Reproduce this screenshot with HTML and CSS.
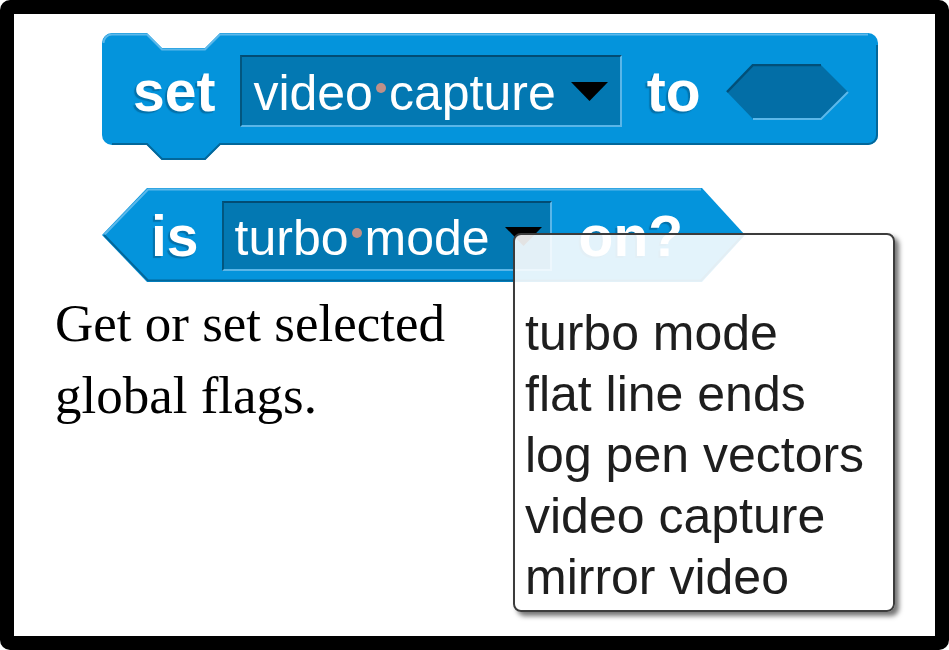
FILE: index.html
```html
<!DOCTYPE html>
<html>
<head>
<meta charset="utf-8">
<link rel="stylesheet" href="styles.css">
</head>
<body>
<div class="frame">
  <div class="block cmd">
    <svg class="shape" width="776" height="128" viewBox="0 0 776 128">
      <path d="M0,10 A10,10 0 0 1 10,0 L45,0 L60,15 L103,15 L118,0 L766,0 A10,10 0 0 1 776,10 L776,102 A10,10 0 0 1 766,112 L118,112 L103,127 L60,127 L45,112 L10,112 A10,10 0 0 1 0,102 Z" fill="#0494dc"/>
      <path d="M1.5,10 A8.5,8.5 0 0 1 10,1.5 L45,1.5 L60,16.5 L103,16.5 L118,1.5 L766,1.5" fill="none" stroke="#5cb8ea" stroke-width="2"/>
      <path d="M10,111 L45,111 L60,126 L103,126 L118,111 L766,111 A9,9 0 0 0 775,102 L775,12" fill="none" stroke="#03679a" stroke-width="2"/>
    </svg>
    <span class="label">set</span>
    <span class="slot"><span class="slot-text">video<span class="dot"></span>capture</span><svg class="arrow" width="37" height="19" viewBox="0 0 37 19"><polygon points="0,0 37,0 18.5,19" fill="#000"/></svg></span>
    <span class="label">to</span>
    <svg class="hex" width="123" height="56" viewBox="0 0 123 56">
      <polygon points="1,28 27,1 95,1 122,28 95,55 27,55" fill="#036ea6"/>
      <polyline points="1,28 27,1 95,1" fill="none" stroke="#024f78" stroke-width="2.5"/>
      <polyline points="27,55 95,55 122,28" fill="none" stroke="#5cb8ea" stroke-width="2"/>
    </svg>
  </div>

  <div class="block pred">
    <svg class="shape" width="643" height="94" viewBox="0 0 643 94">
      <path d="M0,47 L45,0 L600,0 L643,47 L600,94 L45,94 Z" fill="#0494dc"/>
      <path d="M2,47 L46,1.5 L599,1.5" fill="none" stroke="#5cb8ea" stroke-width="2"/>
      <path d="M2,47 L46,92.5 L599,92.5 L641,47" fill="none" stroke="#03679a" stroke-width="2"/>
    </svg>
    <span class="label">is</span>
    <span class="slot slot-pred"><span class="slot-text">turbo<span class="dot"></span>mode</span><svg class="arrow" width="37" height="19" viewBox="0 0 37 19"><polygon points="0,0 37,0 18.5,19" fill="#000"/></svg></span>
    <span class="label label-on">on?</span>
  </div>

  <p class="desc">Get or set selected<br>global flags.</p>

  <div class="menu">
    <div class="item">turbo mode</div>
    <div class="item">flat line ends</div>
    <div class="item">log pen vectors</div>
    <div class="item">video capture</div>
    <div class="item">mirror video</div>
  </div>
</div>
</body>
</html>
```

FILE: styles.css
```css
html, body {
  margin: 0;
  padding: 0;
  background: #fff;
}

.frame {
  box-sizing: border-box;
  width: 949px;
  height: 650px;
  border: 14px solid #000;
  border-radius: 10px;
  position: relative;
  padding-top: 19px;
  background: #fff;
  overflow: hidden;
}

.block {
  position: relative;
  z-index: 0;
  display: flex;
  align-items: center;
  box-sizing: border-box;
  margin-left: 88px;
  font-family: "Liberation Sans", Arial, sans-serif;
}

.shape {
  position: absolute;
  left: 0;
  top: 0;
  z-index: -1;
}

.cmd {
  width: 776px;
  height: 112px;
  padding: 4px 0 0 31px;
  gap: 25px;
}

.pred {
  width: 643px;
  height: 94px;
  margin-top: 43px;
  padding: 2px 0 0 49px;
  gap: 23px;
}

.label {
  font-size: 57px;
  font-weight: bold;
  color: #fff;
  line-height: 1;
  text-shadow: -2px 2px 1px rgba(1, 70, 110, 0.45);
}

.label-on {
  margin-left: 4px;
}

.slot {
  display: flex;
  align-items: center;
  box-sizing: border-box;
  height: 72px;
  padding: 3px 12px 0 11px;
  gap: 15px;
  background: #0378b2;
  border-top: 2px solid #024c74;
  border-left: 2px solid #02567f;
  border-bottom: 2px solid #5ab6e8;
  border-right: 2px solid #5ab6e8;
}

.slot-pred {
  height: 70px;
  padding-right: 8px;
}

.slot-text {
  font-size: 50px;
  line-height: 1;
  color: #fff;
  white-space: nowrap;
}

.dot {
  display: inline-block;
  width: 10px;
  height: 10px;
  border-radius: 50%;
  background: #c09088;
  margin: 0 3px 17px 3px;
  vertical-align: baseline;
}

.arrow {
  display: block;
  flex: none;
  margin-top: -2px;
}

.hex {
  display: block;
  flex: none;
  margin-top: 2px;
}

.desc {
  margin: 5px 0 0 41px;
  font-family: "Liberation Serif", "Times New Roman", serif;
  font-size: 53px;
  line-height: 72px;
  color: #000;
}

.menu {
  position: absolute;
  left: 499px;
  top: 219px;
  box-sizing: border-box;
  width: 382px;
  height: 379px;
  padding: 68px 10px 0 10px;
  background: rgba(255, 255, 255, 0.89);
  border: 2px solid #3c3c3c;
  border-radius: 8px;
  box-shadow: 4px 4px 5px rgba(0, 0, 0, 0.55);
  font-family: "Liberation Sans", Arial, sans-serif;
  font-size: 50px;
  line-height: 61px;
  color: #1e1e1e;
}

.item {
  white-space: nowrap;
}
```
